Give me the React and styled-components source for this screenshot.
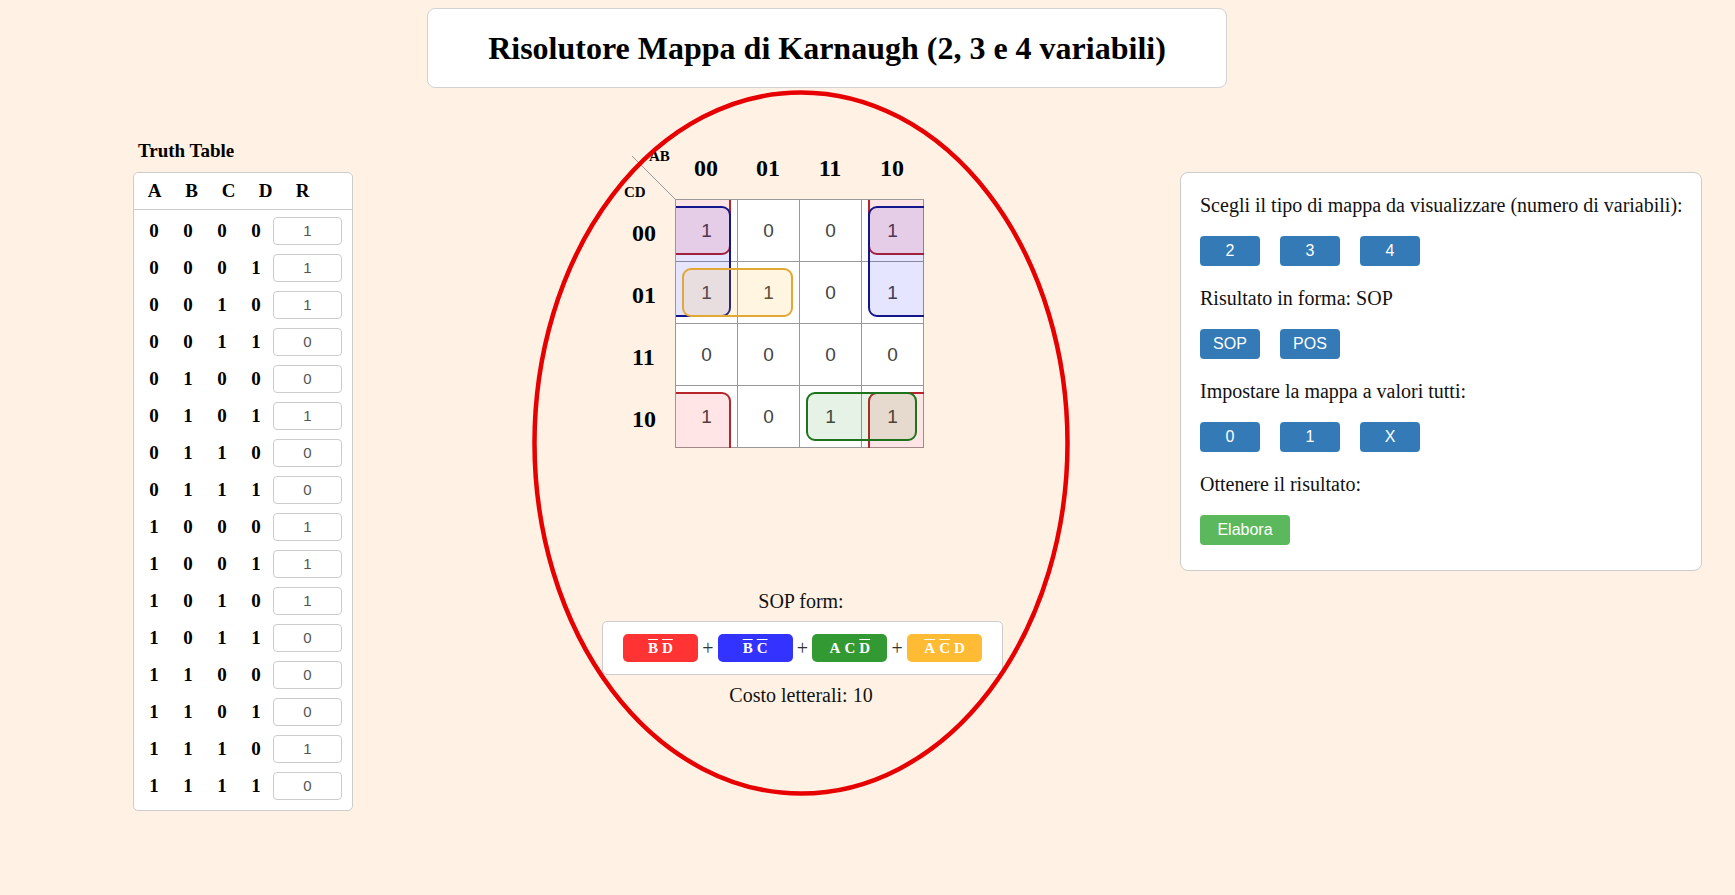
import React from 'react';
import styled, { createGlobalStyle } from 'styled-components';

const STEP = 62;

const LOOP = {
  red: { line: '#b5252b', fill: 'rgba(255, 0, 0, 0.1)' },
  blue: { line: '#14148c', fill: 'rgba(0, 0, 255, 0.1)' },
  green: { line: '#1c731c', fill: 'rgba(0, 128, 0, 0.1)' },
  orange: { line: '#e3a733', fill: 'rgba(255, 170, 0, 0.12)' },
};

const CHIP = {
  red: '#ff3333',
  blue: '#3333ff',
  green: '#339933',
  orange: '#ffbb33',
};

// results in truth table order (ABCD = 0000 ... 1111)
const results = [1, 1, 1, 0, 0, 1, 0, 0, 1, 1, 1, 0, 0, 0, 1, 0];
const gray = ['00', '01', '11', '10'];

// loops in cell units, the wrap-round ones go past the edges and get clipped
const loops = [
  { tone: 'red', r: -1, c: -1, h: 2, w: 2 },
  { tone: 'red', r: -1, c: 3, h: 2, w: 2 },
  { tone: 'red', r: 3, c: -1, h: 2, w: 2 },
  { tone: 'red', r: 3, c: 3, h: 2, w: 2 },
  { tone: 'blue', r: 0, c: -1, h: 2, w: 2 },
  { tone: 'blue', r: 0, c: 3, h: 2, w: 2 },
  { tone: 'green', r: 3, c: 2, h: 1, w: 2 },
  { tone: 'orange', r: 1, c: 0, h: 1, w: 2 },
];

const terms = [
  { tone: 'red', vars: [['B', true], ['D', true]] },
  { tone: 'blue', vars: [['B', true], ['C', true]] },
  { tone: 'green', vars: [['A', false], ['C', false], ['D', true]] },
  { tone: 'orange', vars: [['A', true], ['C', true], ['D', false]] },
];

const GlobalStyle = createGlobalStyle`
  html, body {
    margin: 0;
    padding: 0;
  }
  body {
    width: 1735px;
    height: 895px;
    overflow: hidden;
    background: #fff2e4;
    color: #111;
    font-family: "Liberation Serif", "Times New Roman", serif;
  }
`;

const TitleBox = styled.header`
  box-sizing: border-box;
  width: 800px;
  height: 80px;
  margin: 8px 0 0 427px;
  display: flex;
  align-items: center;
  justify-content: center;
  background: #fff;
  border: 1px solid #d2d2d2;
  border-radius: 8px;
`;

const Title = styled.h1`
  margin: 0;
  font-size: 32px;
  font-weight: 700;
  color: #000;
`;

const Main = styled.main`
  display: flex;
  align-items: flex-start;
  margin-top: 2px;
`;

const LeftCol = styled.section`
  width: 220px;
  margin-left: 133px;
  padding-top: 50px;
`;

const TableTitle = styled.h3`
  margin: 0 0 10px 5px;
  font-size: 19px;
  line-height: 22px;
  color: #000;
`;

const TruthBox = styled.div`
  box-sizing: border-box;
  width: 220px;
  padding-bottom: 6px;
  background: #fff;
  border: 1px solid #ccc;
  border-radius: 5px;
`;

const HeadRow = styled.div`
  display: grid;
  grid-template-columns: repeat(5, 37px);
  align-items: center;
  height: 36px;
  padding-left: 2px;
  border-bottom: 1px solid #ccc;
  font-size: 19px;
  font-weight: 700;
  text-align: center;
  color: #000;
`;

const Body = styled.div`
  padding-top: 2px;
`;

const BodyRow = styled.div`
  display: grid;
  grid-template-columns: repeat(4, 34px) 69px;
  align-items: center;
  height: 37px;
  padding-left: 3px;
  font-size: 19px;
  font-weight: 700;
  text-align: center;
  color: #000;
`;

const RInput = styled.input`
  box-sizing: border-box;
  width: 69px;
  height: 28px;
  padding: 0;
  border: 1px solid #ccc;
  border-radius: 4px;
  background: #fff;
  text-align: center;
  font-family: "Liberation Sans", Arial, sans-serif;
  font-size: 15px;
  color: #555;
  outline: none;
`;

const CenterCol = styled.section`
  position: relative;
  box-sizing: border-box;
  width: 538px;
  height: 706px;
  margin-left: 179px;
  padding-top: 66px;
`;

const Ring = styled.svg`
  position: absolute;
  left: 0;
  top: 0;
  pointer-events: none;
  z-index: 5;
`;

const KMap = styled.div`
  display: grid;
  grid-template-columns: 43px 249px;
  grid-template-rows: 43px 249px;
  margin-left: 100px;
`;

const Corner = styled.div`
  position: relative;
  font-size: 15px;
  font-weight: 700;
  color: #000;
`;

const CornerLabel = styled.span`
  position: absolute;
  line-height: 17px;
  ${p => (p.$top ? 'top: -8px; left: 17px;' : 'top: 28px; left: -8px;')}
`;

const ColHeads = styled.div`
  display: flex;
`;

const ColHead = styled.div`
  width: ${STEP}px;
  font-size: 24px;
  line-height: 24px;
  font-weight: 700;
  text-align: center;
  color: #000;
`;

const RowHeads = styled.div`
  display: grid;
  grid-template-rows: repeat(4, ${STEP}px);
  padding-top: 1px;
`;

const RowHead = styled.div`
  display: flex;
  align-items: center;
  padding-top: 4px;
  font-size: 24px;
  font-weight: 700;
  color: #000;
`;

const Grid = styled.div`
  position: relative;
  overflow: hidden;
  display: grid;
  grid-template-columns: repeat(4, ${STEP}px);
  grid-auto-rows: ${STEP}px;
  border-left: 1px solid #999;
  border-top: 1px solid #999;
  background: #fff;
`;

const Cell = styled.div`
  display: flex;
  align-items: center;
  justify-content: center;
  border-right: 1px solid #999;
  border-bottom: 1px solid #999;
  font-family: "Liberation Sans", Arial, sans-serif;
  font-size: 19px;
  color: #444;
`;

const Loop = styled.div`
  position: absolute;
  box-sizing: border-box;
  left: ${p => p.$c * STEP + 6}px;
  top: ${p => p.$r * STEP + 6}px;
  width: ${p => p.$w * STEP - 13}px;
  height: ${p => p.$h * STEP - 13}px;
  border: 2px solid ${p => LOOP[p.$tone].line};
  border-radius: 9px;
  background: ${p => LOOP[p.$tone].fill};
  pointer-events: none;
`;

const SopLabel = styled.div`
  margin-top: 142px;
  font-size: 20px;
  line-height: 23px;
  text-align: center;
  color: #111;
`;

const Formula = styled.div`
  box-sizing: border-box;
  width: 401px;
  height: 54px;
  margin: 8px 0 0 70px;
  padding: 0 20px;
  display: flex;
  align-items: center;
  background: #fff;
  border: 1px solid #ccc;
  border-radius: 5px;
`;

const Chip = styled.div`
  width: 75px;
  height: 28px;
  display: flex;
  align-items: center;
  justify-content: center;
  gap: 4px;
  border-radius: 5px;
  background: ${p => CHIP[p.$tone]};
  color: #fff;
  font-size: 15px;
  font-weight: 700;
`;

const Var = styled.span`
  text-decoration: ${p => (p.$bar ? 'overline' : 'none')};
`;

const Plus = styled.span`
  width: 20px;
  text-align: center;
  font-size: 20px;
  color: #333;
`;

const Cost = styled.div`
  margin-top: 9px;
  font-size: 20px;
  line-height: 23px;
  text-align: center;
  color: #111;
`;

const Panel = styled.aside`
  box-sizing: border-box;
  width: 522px;
  height: 399px;
  margin: 82px 0 0 110px;
  padding: 21px 19px 0;
  background: #fff;
  border: 1px solid #ccc;
  border-radius: 8px;
`;

const Label = styled.p`
  margin: 21px 0 0;
  font-size: 20px;
  line-height: 22px;
  white-space: nowrap;
  color: #111;
  &:first-child {
    margin-top: 0;
  }
`;

const BtnRow = styled.div`
  display: flex;
  gap: 20px;
  margin-top: 20px;
`;

const Btn = styled.button`
  width: ${p => (p.$wide ? 90 : 60)}px;
  height: 30px;
  padding: 0;
  border: none;
  border-radius: 4px;
  background: ${p => (p.$go ? '#5cb85c' : '#337ab7')};
  color: #fff;
  font-family: "Liberation Sans", Arial, sans-serif;
  font-size: 16px;
  cursor: pointer;
`;

function TruthTable() {
  return (
    <LeftCol>
      <TableTitle>Truth Table</TableTitle>
      <TruthBox>
        <HeadRow>
          <span>A</span>
          <span>B</span>
          <span>C</span>
          <span>D</span>
          <span>R</span>
        </HeadRow>
        <Body>
          {results.map((r, i) => (
            <BodyRow key={i}>
              {[3, 2, 1, 0].map(b => (
                <span key={b}>{(i >> b) & 1}</span>
              ))}
              <RInput defaultValue={r} readOnly />
            </BodyRow>
          ))}
        </Body>
      </TruthBox>
    </LeftCol>
  );
}

function KarnaughMap() {
  return (
    <KMap>
      <Corner>
        <svg width="43" height="43">
          <line x1="0" y1="0" x2="43" y2="43" stroke="#999" strokeWidth="1" />
        </svg>
        <CornerLabel $top>AB</CornerLabel>
        <CornerLabel>CD</CornerLabel>
      </Corner>
      <ColHeads>
        {gray.map(g => <ColHead key={g}>{g}</ColHead>)}
      </ColHeads>
      <RowHeads>
        {gray.map(g => <RowHead key={g}>{g}</RowHead>)}
      </RowHeads>
      <Grid>
        {gray.map(cd =>
          gray.map(ab => (
            <Cell key={ab + cd}>{results[parseInt(ab + cd, 2)]}</Cell>
          ))
        )}
        {loops.map((l, i) => (
          <Loop key={i} $tone={l.tone} $r={l.r} $c={l.c} $h={l.h} $w={l.w} />
        ))}
      </Grid>
    </KMap>
  );
}

function Result() {
  return (
    <>
      <SopLabel>SOP form:</SopLabel>
      <Formula>
        {terms.map((t, i) => (
          <React.Fragment key={t.tone}>
            {i > 0 && <Plus>+</Plus>}
            <Chip $tone={t.tone}>
              {t.vars.map(([v, bar]) => (
                <Var key={v} $bar={bar}>{v}</Var>
              ))}
            </Chip>
          </React.Fragment>
        ))}
      </Formula>
      <Cost>Costo letterali: 10</Cost>
    </>
  );
}

function Controls() {
  return (
    <Panel>
      <Label>Scegli il tipo di mappa da visualizzare (numero di variabili):</Label>
      <BtnRow>
        <Btn>2</Btn>
        <Btn>3</Btn>
        <Btn>4</Btn>
      </BtnRow>
      <Label>Risultato in forma: SOP</Label>
      <BtnRow>
        <Btn>SOP</Btn>
        <Btn>POS</Btn>
      </BtnRow>
      <Label>Impostare la mappa a valori tutti:</Label>
      <BtnRow>
        <Btn>0</Btn>
        <Btn>1</Btn>
        <Btn>X</Btn>
      </BtnRow>
      <Label>Ottenere il risultato:</Label>
      <BtnRow>
        <Btn $wide $go>Elabora</Btn>
      </BtnRow>
    </Panel>
  );
}

export default function App() {
  return (
    <>
      <GlobalStyle />
      <TitleBox>
        <Title>Risolutore Mappa di Karnaugh (2, 3 e 4 variabili)</Title>
      </TitleBox>
      <Main>
        <TruthTable />
        <CenterCol>
          <Ring width="538" height="706">
            <ellipse cx="269" cy="353" rx="266.5" ry="350.5" fill="none" stroke="#e60000" strokeWidth="4.5" />
          </Ring>
          <KarnaughMap />
          <Result />
        </CenterCol>
        <Controls />
      </Main>
    </>
  );
}
